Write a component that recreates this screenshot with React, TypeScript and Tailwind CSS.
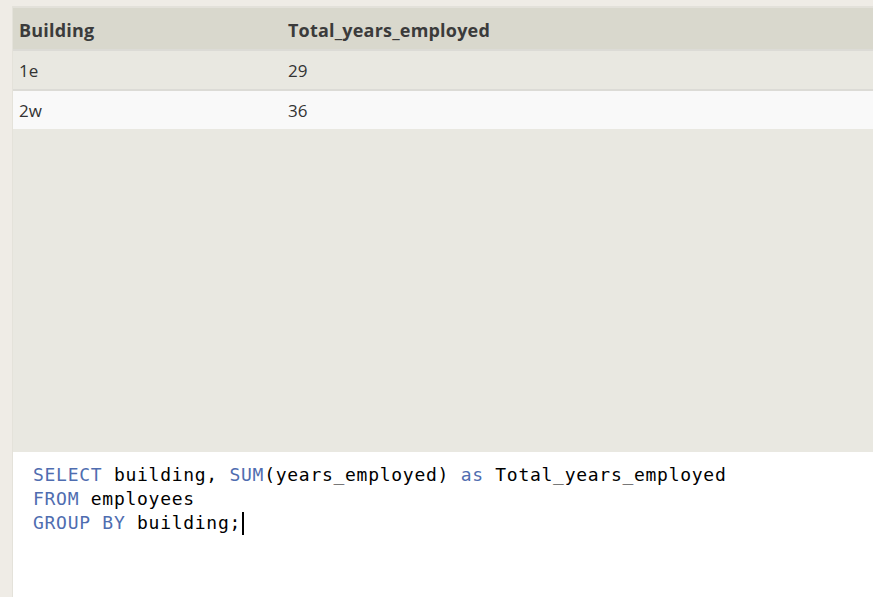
const rows = [
  { building: "1e", total: "29", bg: "bg-[#e9e8e1]" },
  { building: "2w", total: "36", bg: "bg-[#f9f9f9]" },
];

const Kw = ({ children }: { children: React.ReactNode }) => (
  <span className="text-[#4f6db0]">{children}</span>
);

export default function App() {
  return (
    <div className="h-[597px] w-[873px] overflow-hidden bg-[#efece6] pl-[12px] pt-[6px]">
      <div className="flex h-full flex-col border-l border-[#e4e2da] bg-[#e9e8e1]">
        {/* results table */}
        <div className="flex-1 border-t-2 border-[#e3e1da]">
          <div className="flex h-[41px] items-center pt-[3px] bg-[#d9d8cd] font-['Open_Sans',sans-serif] text-[18px] font-bold tracking-[0.2px] text-[#3b3b3b]">
            <div className="w-[275px] pl-[6px]">Building</div>
            <div>Total_years_employed</div>
          </div>
          {rows.map((r) => (
            <div
              key={r.building}
              className={`flex h-[40px] items-center pt-[1px] border-t-2 border-[#dcdbd6] font-['Open_Sans',sans-serif] text-[17px] text-[#333] ${r.bg}`}
            >
              <div className="w-[275px] pl-[6px]">{r.building}</div>
              <div>{r.total}</div>
            </div>
          ))}
        </div>
        {/* query editor */}
        <div className="h-[145px] bg-white pl-[20px] pt-[11px] font-['DejaVu_Sans_Mono',monospace] text-[18px] leading-[24px] tracking-[0.72px] text-black">
          <div>
            <Kw>SELECT</Kw> building, <Kw>SUM</Kw>(years_employed) <Kw>as</Kw> Total_years_employed
          </div>
          <div>
            <Kw>FROM</Kw> employees
          </div>
          <div className="flex items-center">
            <span>
              <Kw>GROUP BY</Kw> building;
            </span>
            <span className="ml-[1px] inline-block h-[23px] w-[2px] bg-black" />
          </div>
        </div>
      </div>
    </div>
  );
}
